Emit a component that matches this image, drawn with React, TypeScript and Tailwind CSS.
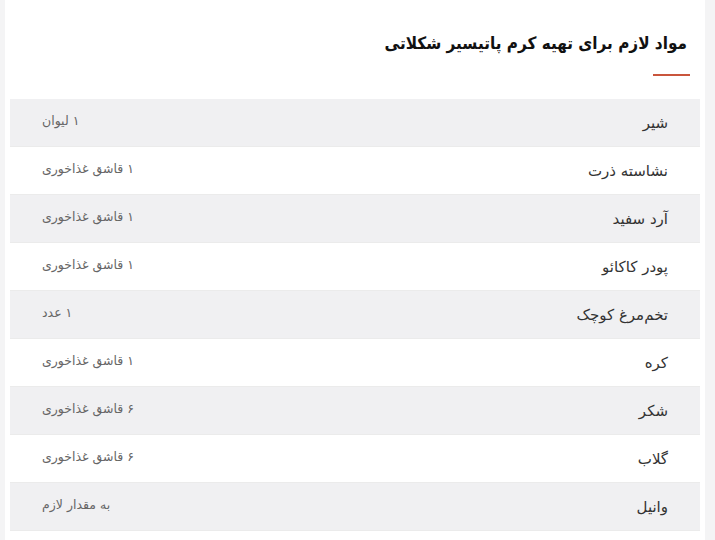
import React from "react";

const ROWS = [
  { name: "شیر", amount: "۱ لیوان" },
  { name: "نشاسته ذرت", amount: "۱ قاشق غذاخوری" },
  { name: "آرد سفید", amount: "۱ قاشق غذاخوری" },
  { name: "پودر کاکائو", amount: "۱ قاشق غذاخوری" },
  { name: "تخم‌مرغ کوچک", amount: "۱ عدد" },
  { name: "کره", amount: "۱ قاشق غذاخوری" },
  { name: "شکر", amount: "۶ قاشق غذاخوری" },
  { name: "گلاب", amount: "۶ قاشق غذاخوری" },
  { name: "وانیل", amount: "به مقدار لازم" },
];

export default function App() {
  return (
    <div
      dir="rtl"
      className="min-h-[540px] w-[715px] bg-[#f4f4f5] pl-[5px] pr-[10px]"
      style={{ fontFamily: '"DejaVu Sans", sans-serif' }}
    >
      <div className="min-h-[540px] bg-white px-[5px] pt-[28px]">
        {/* Title */}
        <div className="pr-[10px]">
          <h2
            className="pr-[3px] text-[17px] font-bold leading-[30px] text-[#111]"
            style={{ fontFamily: '"DejaVu Sans Condensed", "DejaVu Sans", sans-serif' }}
          >
            مواد لازم برای تهیه کرم پاتیسیر شکلاتی
          </h2>
          <div className="mt-[16px] h-[2px] w-[37px] bg-[#c9553c]" />
        </div>

        {/* Ingredients table */}
        <div className="mt-[23px]">
          {ROWS.map((row, i) => (
            <div
              key={row.name}
              className={`flex h-[48px] items-center justify-between border-b border-[#ebebeb] px-[32px] ${
                i % 2 === 0 ? "bg-[#f0f0f2]" : "bg-white"
              }`}
            >
              <span className="text-[15px] text-[#333] pt-[2px]">{row.name}</span>
              <span className="text-[12.5px] text-[#666] pb-[2px]">{row.amount}</span>
            </div>
          ))}
        </div>
      </div>
    </div>
  );
}
